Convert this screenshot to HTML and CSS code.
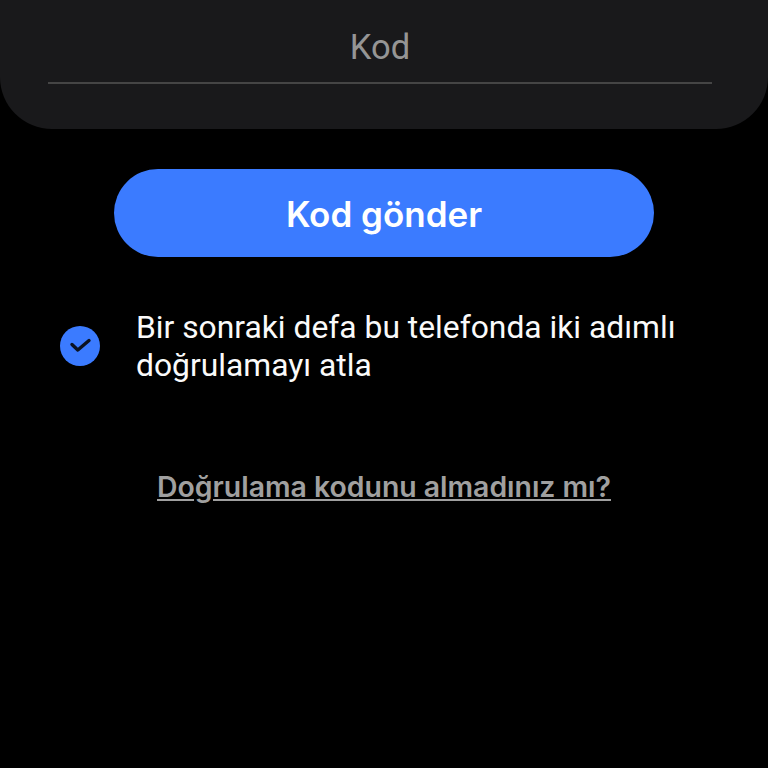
FILE: index.html
```html
<!DOCTYPE html>
<html lang="tr">
<head>
  <meta charset="UTF-8">
  <meta name="viewport" content="width=device-width, initial-scale=1.0">
  <title>Kod</title>
  <link rel="stylesheet" href="styles.css">
</head>
<body>
  <div class="code-card">
    <div class="code-field">Kod</div>
  </div>
  <button class="send-btn">Kod gönder</button>
  <div class="skip-row">
    <svg class="check" width="40" height="40" viewBox="0 0 40 40">
      <circle cx="20" cy="20" r="20" fill="#3b7bff"/>
      <path d="M12 18.5l5.8 5.5 11.2-9.5" fill="none" stroke="#0b1220" stroke-width="3.4" stroke-linecap="round" stroke-linejoin="round"/>
    </svg>
    <div class="skip-text">Bir sonraki defa bu telefonda iki adımlı doğrulamayı atla</div>
  </div>
  <a class="help-link">Doğrulama kodunu almadınız mı?</a>
</body>
</html>
```

FILE: styles.css
```css
body {
  margin: 0;
  height: 768px;
  overflow: hidden;
  background: #000;
  font-family: Roboto, "Noto Sans", sans-serif;
  display: flex;
  flex-direction: column;
  align-items: center;
}
.code-card {
  width: 100%;
  height: 129px;
  box-sizing: border-box;
  padding: 0 56px 0 48px;
  background: #19191b;
  border-radius: 0 0 52px 52px;
}
.code-field {
  height: 84px;
  box-sizing: border-box;
  padding-top: 28px;
  border-bottom: 2px solid #454545;
  color: #959595;
  font-size: 34.5px;
  line-height: 38px;
  text-align: center;
}
.send-btn {
  width: 540px;
  height: 88px;
  margin-top: 40px;
  padding-top: 3px;
  border: none;
  border-radius: 44px;
  background: #3b7bff;
  color: #fff;
  font-family: Inter, Roboto, sans-serif;
  font-size: 35px;
  font-weight: 600;
}
.skip-row {
  width: 100%;
  box-sizing: border-box;
  margin-top: 51px;
  padding: 0 60px;
  display: flex;
  align-items: center;
  gap: 36px;
}
.check {
  flex: none;
}
.skip-text {
  color: #fafafa;
  font-size: 31.8px;
  line-height: 38px;
  width: 560px;
}
.help-link {
  margin-top: 84px;
  color: #a0a0a0;
  font-family: Inter, Roboto, sans-serif;
  font-size: 28.4px;
  font-weight: 600;
  line-height: 38px;
  text-decoration: underline;
}
```
